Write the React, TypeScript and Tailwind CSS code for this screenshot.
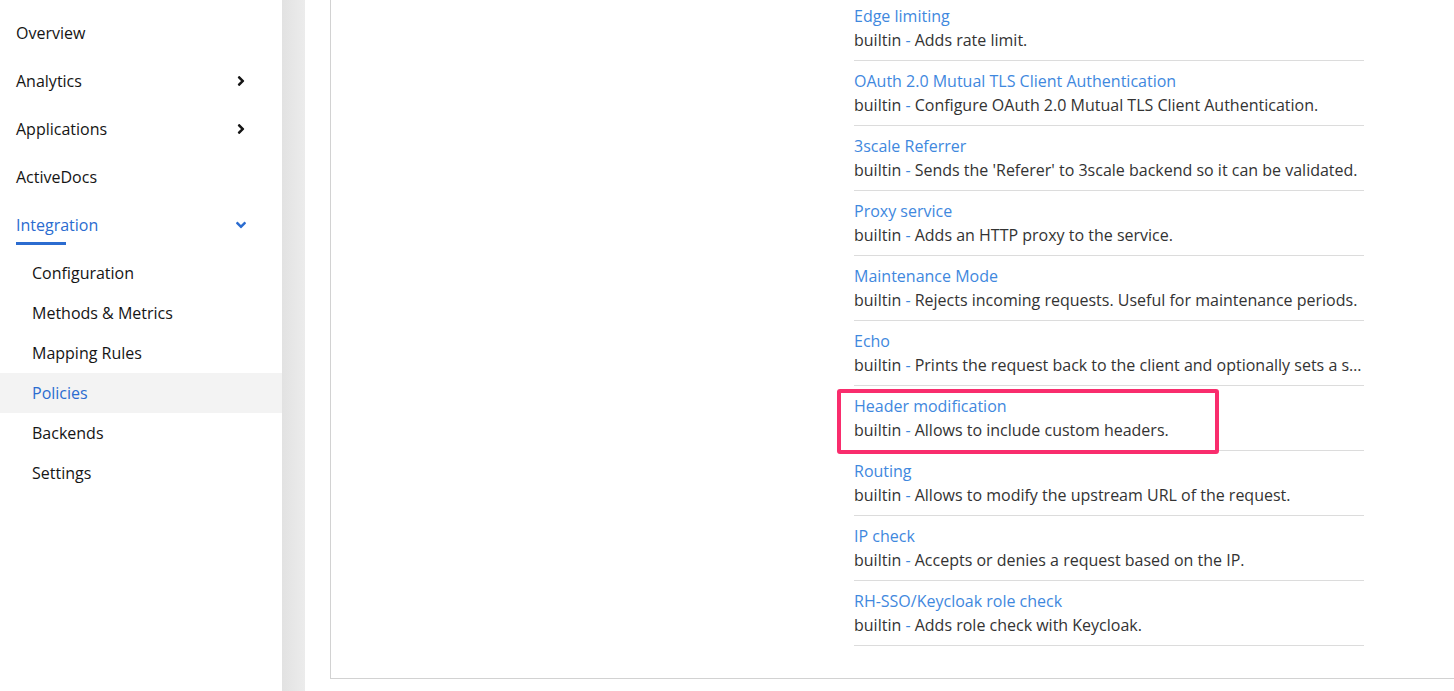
import { FaAngleRight, FaAngleDown } from "react-icons/fa"

const policies = [
  { name: "Edge limiting", desc: "Adds rate limit." },
  { name: "OAuth 2.0 Mutual TLS Client Authentication", desc: "Configure OAuth 2.0 Mutual TLS Client Authentication." },
  { name: "3scale Referrer", desc: "Sends the 'Referer' to 3scale backend so it can be validated." },
  { name: "Proxy service", desc: "Adds an HTTP proxy to the service." },
  { name: "Maintenance Mode", desc: "Rejects incoming requests. Useful for maintenance periods." },
  { name: "Echo", desc: "Prints the request back to the client and optionally sets a status code." },
  { name: "Header modification", desc: "Allows to include custom headers.", highlight: true },
  { name: "Routing", desc: "Allows to modify the upstream URL of the request." },
  { name: "IP check", desc: "Accepts or denies a request based on the IP." },
  { name: "RH-SSO/Keycloak role check", desc: "Adds role check with Keycloak." },
]

const subItems = ["Configuration", "Methods & Metrics", "Mapping Rules", "Policies", "Backends", "Settings"]

export default function App() {
  return (
    <div className="flex h-[691px] w-full overflow-hidden bg-white font-['Open_Sans',sans-serif] text-[16px]">
      {/* Sidebar */}
      <nav className="w-[282px] shrink-0 pt-[9px] text-[#151515]">
        <div className="flex h-12 items-center px-4">Overview</div>
        <div className="flex h-12 items-center justify-between pl-4 pr-[36px]">
          <span>Analytics</span>
          <FaAngleRight className="h-[16px] w-[10px]" />
        </div>
        <div className="flex h-12 items-center justify-between pl-4 pr-[36px]">
          <span>Applications</span>
          <FaAngleRight className="h-[16px] w-[10px]" />
        </div>
        <div className="flex h-12 items-center px-4">ActiveDocs</div>
        <div className="relative flex h-12 items-center justify-between pl-4 pr-[36px] text-[#2b6cd0]">
          <span>Integration</span>
          <FaAngleDown className="h-[16px] w-[10px]" />
          <div className="absolute bottom-[4px] left-4 h-[3px] w-[50px] bg-[#2b6cd0]" />
        </div>
        <div className="pt-1">
          {subItems.map((s) => (
            <div
              key={s}
              className={
                s === "Policies"
                  ? "flex h-10 items-center bg-[#f3f3f3] pl-8 text-[#2b6cd0]"
                  : "flex h-10 items-center pl-8"
              }
            >
              {s}
            </div>
          ))}
        </div>
      </nav>

      {/* Scrollbar-like gutter */}
      <div className="w-[23px] shrink-0 bg-gradient-to-r from-[#e2e2e2] to-[#ececec]" />

      {/* Main content */}
      <main className="min-w-0 flex-1 pl-[25px]">
        <div className="border-b border-l border-[#d2d2d2] pb-[32px] pl-[523px]">
          <ul className="-mt-[4px] w-[510px]">
            {policies.map((p) => (
              <li key={p.name} className="relative border-b border-[#dcdcdc] py-2 leading-6">
                <a className="block text-[#3f88de]">{p.name}</a>
                <p className="truncate text-[#333333]">
                  builtin <span className="text-[#3f88de]">-</span> {p.desc}
                </p>
                {p.highlight && (
                  <div className="absolute left-[-17px] top-[3px] h-[65px] w-[382px] rounded-[3px] border-4 border-[#f92d6d]" />
                )}
              </li>
            ))}
          </ul>
        </div>
      </main>
    </div>
  )
}
